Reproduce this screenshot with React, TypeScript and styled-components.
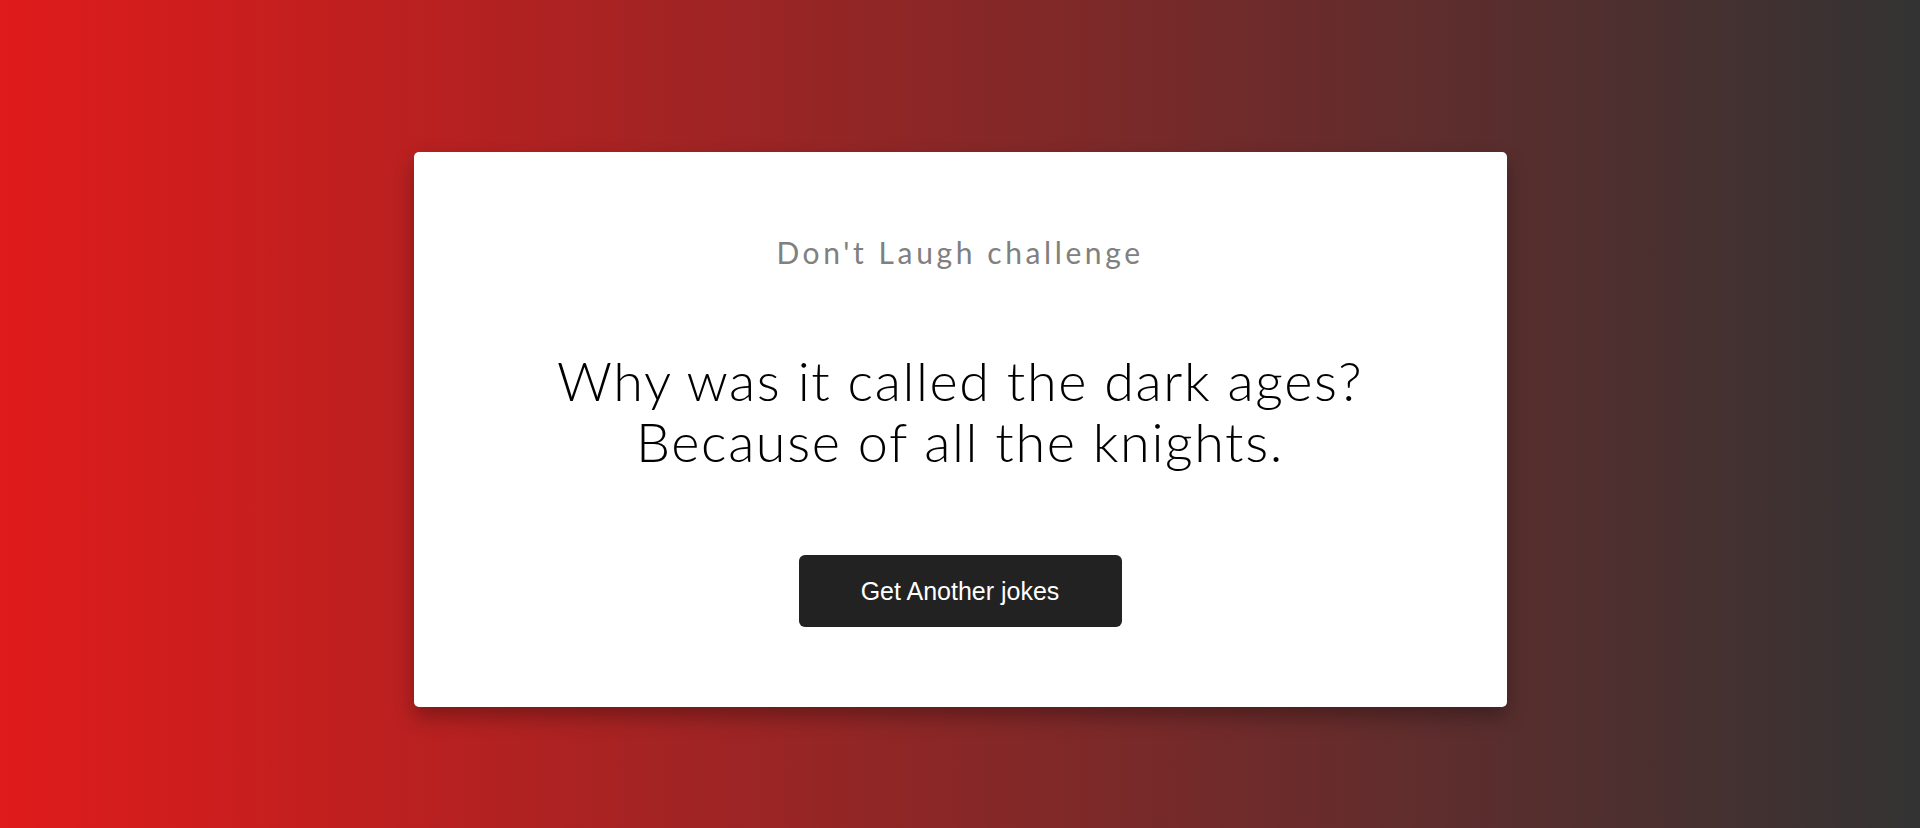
import React from "react"
import styled, { createGlobalStyle } from "styled-components"

const GlobalStyle = createGlobalStyle`
  * {
    box-sizing: border-box;
  }
  html, body {
    margin: 0;
    padding: 0;
  }
  body {
    font-family: "Lato", "Liberation Sans", sans-serif;
    background: linear-gradient(to right, #df1b1b, #333333);
    min-height: 100vh;
  }
`

const Page = styled.div`
  min-height: 100vh;
  display: flex;
  justify-content: center;
  align-items: flex-start;
  padding-top: 152px;
`

const Card = styled.div`
  width: 1093px;
  background: #fff;
  border-radius: 5px;
  box-shadow: 0 10px 20px rgba(0, 0, 0, 0.3);
  padding: 82px 40px 80px;
  display: flex;
  flex-direction: column;
  align-items: center;
  text-align: center;
`

const Title = styled.h3`
  margin: 0;
  font-family: "Lato", sans-serif;
  font-weight: 400;
  font-size: 30px;
  letter-spacing: 3.6px;
  color: #808080;
`

const Joke = styled.p`
  margin: 80px 0 0;
  font-family: "Lato", sans-serif;
  font-weight: 300;
  font-size: 54px;
  line-height: 61px;
  letter-spacing: 1.6px;
  color: #000;
`

const Button = styled.button`
  margin-top: 83px;
  width: 323px;
  height: 72px;
  border: none;
  border-radius: 6px;
  background: #222;
  color: #fff;
  font-family: "Liberation Sans", Arial, sans-serif;
  font-size: 25px;
  cursor: pointer;
`

const App = () => (
  <>
    <GlobalStyle />
    <Page>
      <Card>
        <Title>Don't Laugh challenge</Title>
        <Joke>
          Why was it called the dark ages?
          <br />
          Because of all the knights.
        </Joke>
        <Button>Get Another jokes</Button>
      </Card>
    </Page>
  </>
)

export default App
